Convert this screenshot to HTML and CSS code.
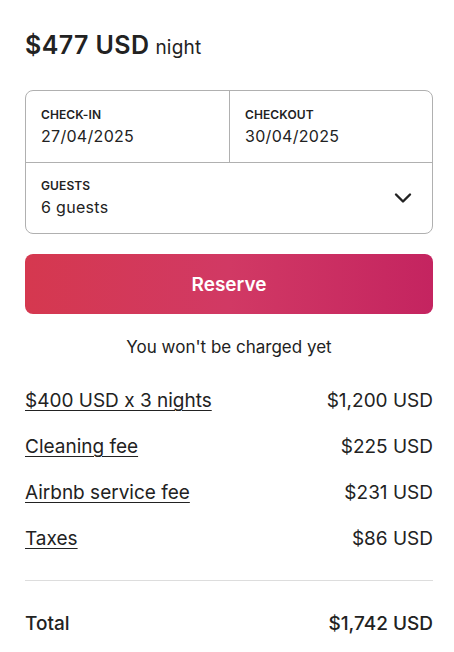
FILE: index.html
```html
<!DOCTYPE html>
<html>
<head>
<meta charset="utf-8">
<link rel="stylesheet" href="styles.css">
</head>
<body>
<div class="card">
  <div class="price"><span class="amount">$477 USD</span> <span class="unit">night</span></div>
  <div class="picker">
    <div class="dates">
      <div class="cell">
        <div class="label">CHECK-IN</div>
        <div class="value">27/04/2025</div>
      </div>
      <div class="cell cell-right">
        <div class="label">CHECKOUT</div>
        <div class="value">30/04/2025</div>
      </div>
    </div>
    <div class="guests">
      <div>
        <div class="label">GUESTS</div>
        <div class="value">6 guests</div>
      </div>
      <svg class="chev" width="18" height="12" viewBox="0 0 18 12"><path d="M2 2.5 L9 9.5 L16 2.5" fill="none" stroke="#222" stroke-width="2.4" stroke-linecap="round" stroke-linejoin="round"/></svg>
    </div>
  </div>
  <button class="reserve">Reserve</button>
  <div class="note">You won't be charged yet</div>
  <div class="rows">
    <div class="row"><span class="link">$400 USD x 3 nights</span><span>$1,200 USD</span></div>
    <div class="row"><span class="link">Cleaning fee</span><span>$225 USD</span></div>
    <div class="row"><span class="link">Airbnb service fee</span><span>$231 USD</span></div>
    <div class="row"><span class="link">Taxes</span><span>$86 USD</span></div>
  </div>
  <div class="total"><span>Total</span><span>$1,742 USD</span></div>
</div>
</body>
</html>
```
FILE: styles.css
```css
html, body { margin: 0; padding: 0; background: #fff; }
body { font-family: Inter, "Noto Sans", sans-serif; color: #222; }
.card { width: 408px; padding: 29px 0 0 25px; }
.price { display: flex; align-items: baseline; gap: 6px; line-height: 32px; }
.amount { font-size: 25px; font-weight: 600; letter-spacing: 0.4px; }
.unit { font-size: 19px; letter-spacing: 0.2px; }
.picker { margin-top: 26px; border: 1px solid #b0b0b0; border-radius: 8px; }
.dates { display: flex; border-bottom: 1px solid #b0b0b0; height: 71px; }
.cell { flex: 0 0 203px; padding: 17px 15px 0; box-sizing: border-box; }
.cell-right { flex: 1; border-left: 1px solid #b0b0b0; }
.label { font-size: 12px; font-weight: 600; letter-spacing: 0.1px; line-height: 14px; }
.value { font-size: 16px; letter-spacing: 0.3px; line-height: 20px; margin-top: 4px; }
.guests { display: flex; justify-content: space-between; align-items: flex-start; height: 70px; box-sizing: border-box; padding: 16px 20px 0 15px; }
.chev { margin-top: 13px; }
.reserve { display: block; width: 100%; height: 60px; margin-top: 20px; border: none; border-radius: 8px; color: #fff; font-family: inherit; font-size: 19px; font-weight: 600; background: linear-gradient(to right, #d5384f, #d13964 50%, #c42460); }
.note { text-align: center; font-size: 17px; margin-top: 23px; line-height: 20px; }
.rows { margin-top: 32px; display: flex; flex-direction: column; gap: 22px; padding-bottom: 29px; border-bottom: 1px solid #ddd; }
.row { display: flex; justify-content: space-between; font-size: 19px; line-height: 24px; }
.link { text-decoration: underline; text-underline-offset: 3px; text-decoration-thickness: 1px; }
.total { display: flex; justify-content: space-between; margin-top: 31px; font-size: 19px; font-weight: 500; line-height: 24px; }
```
